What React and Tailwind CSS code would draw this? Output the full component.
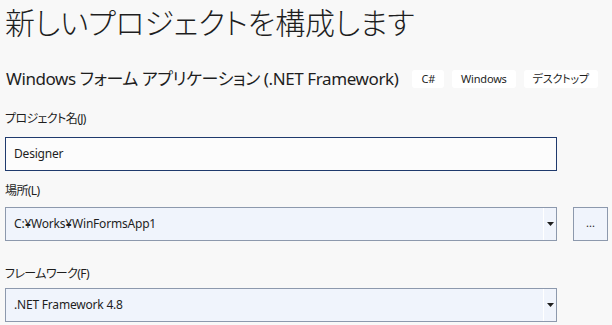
import React from "react";

const FONT =
  "font-['Noto_Sans','Noto_Sans_CJK_JP',sans-serif] [font-feature-settings:'palt']";

const TAGS = ["C#", "Windows", "デスクトップ"];

export default function App() {
  return (
    <div className={`h-[325px] w-[612px] overflow-hidden bg-[#f8f8f8] pl-[5px] text-[#1e1e1e] ${FONT}`}>
      {/* Header */}
      <h1 className="whitespace-nowrap pt-[2px] text-[30px] font-light leading-[42px] tracking-[-0.2px]">
        新しいプロジェクトを構成します
      </h1>

      <div className="mt-[26px] flex h-[18px] items-center whitespace-nowrap">
        <div className="pl-[1px] text-[17px] leading-[18px] tracking-[-0.4px]">
          Windows フォーム アプリケーション (.NET Framework)
        </div>
        <div className="ml-[14px] flex shrink-0 gap-2">
          {TAGS.map((t) => (
            <span key={t} className="flex h-[18px] items-center rounded-[3px] bg-white px-[9px] text-[11px] tracking-[-0.2px]">
              {t}
            </span>
          ))}
        </div>
      </div>

      {/* Project name */}
      <Label className="mt-[23px]">プロジェクト名(J)</Label>
      <div className="mt-[10px] flex h-[34px] w-[552px] items-center border border-[#1f3a6d] bg-[#fcfcfc] pl-[8px] text-[12px] tracking-[-0.2px]">
        Designer
      </div>

      {/* Location */}
      <Label className="mt-[12px]">場所(L)</Label>
      <div className="mt-[8px] flex items-center gap-[16px]">
        <Combo value="C:¥Works¥WinFormsApp1" />
        <button
          type="button"
          className="flex h-[34px] w-[35px] items-center justify-center border border-[#8d99ad] bg-[#f0f4fc] pb-[2px] text-[11px]"
        >
          ...
        </button>
      </div>

      {/* Framework */}
      <Label className="mt-[25px]">フレームワーク(F)</Label>
      <div className="mt-[6px]">
        <Combo value=".NET Framework 4.8" />
      </div>
    </div>
  );
}

function Label({ className, children }) {
  return <div className={`text-[12px] leading-[16px] tracking-[-0.6px] ${className}`}>{children}</div>;
}

function Combo({ value }) {
  return (
    <div className="flex h-[34px] w-[552px] items-stretch border border-[#8d99ad] bg-[#f0f4fc] text-[12px] tracking-[-0.2px]">
      <div className="flex flex-1 items-center pl-[8px]">{value}</div>
      <div className="flex w-[13px] items-center justify-center border-l border-white">
        <svg width="7" height="4" viewBox="0 0 7 4">
          <path d="M0 0h7L3.5 4z" fill="#1e1e1e" />
        </svg>
      </div>
    </div>
  );
}
